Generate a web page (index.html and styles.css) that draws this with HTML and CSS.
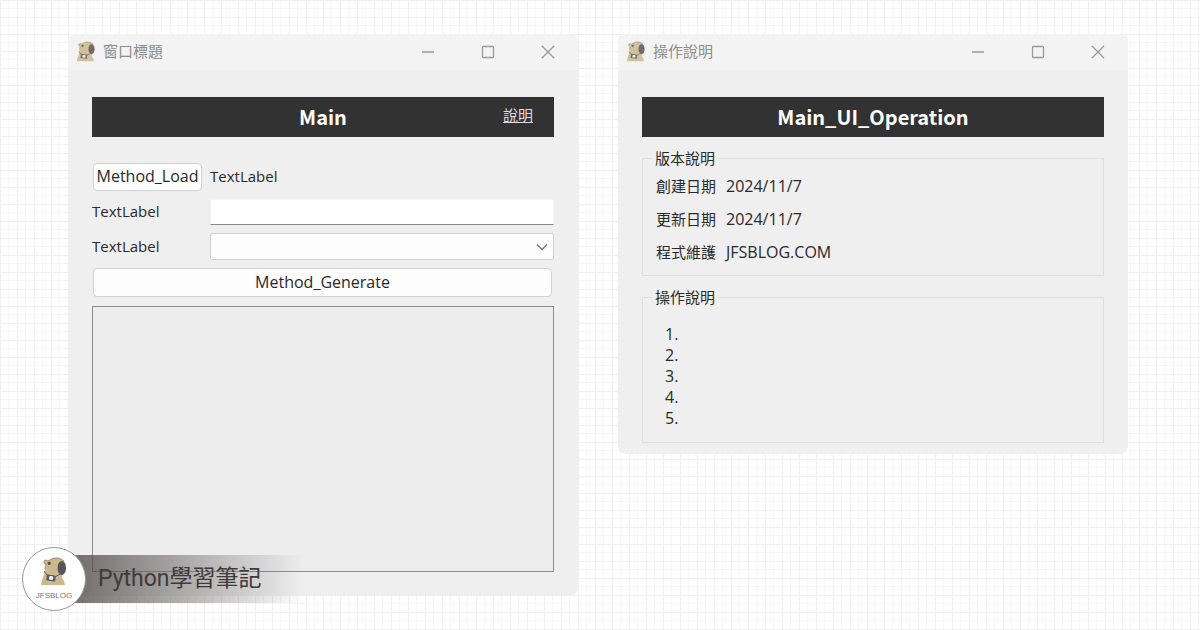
FILE: index.html
```html
<!DOCTYPE html>
<html lang="zh-Hant">
<head>
<meta charset="utf-8">
<meta name="viewport" content="width=device-width, initial-scale=1">
<title>Python學習筆記</title>
<link rel="stylesheet" href="styles.css">
</head>
<body>
<svg class="sprites" aria-hidden="true">
  <symbol id="capybara" viewBox="0 0 28 30">
    <path d="M1 28C2 22 5 17 5 12Q5 9 6 7.500Q3 7 4 4Q6 2 8 4Q13 0 18 1Q24 2 25.500 7Q27 13 24 17Q21 19 22 21Q25 24 25 28Z" fill="#cdb88d"/>
    <path d="M5 12Q5 9 6 7.500Q3 7 4 4Q6 2 8 4Q13 0 18 1Q22 2 24 4" fill="none" stroke="#80715d" stroke-width=".7"/>
    <ellipse cx="21.700" cy="11" rx="4.200" ry="7" fill="#57545a"/>
    <circle cx="9.200" cy="6.300" r="1.600" fill="#53483f"/>
    <path d="M4 14L7 18M20 17L15 20" fill="none" stroke="#5a5149" stroke-width=".9"/>
    <rect x="6.500" y="18" width="9" height="6" rx="1" fill="#595960" transform="rotate(7 11 21)"/>
    <rect x="9" y="19.200" width="4.200" height="3.600" rx="1" fill="#e4eff7" transform="rotate(7 11 21)"/>
  </symbol>
</svg>
<main class="desktop">
  <section class="window">
    <header class="titlebar">
      <svg class="app-icon" aria-hidden="true"><use href="#capybara"/></svg>
      <span class="window-title">窗口標題</span>
      <div class="controls">
        <button type="button" aria-label="Minimize"><svg viewBox="0 0 14 14"><path d="M1 7H13"/></svg></button>
        <button type="button" aria-label="Maximize"><svg viewBox="0 0 14 14"><rect x="1.500" y="1.500" width="11" height="11" rx="1"/></svg></button>
        <button type="button" aria-label="Close"><svg viewBox="0 0 14 14"><path d="M1 1L13 13M13 1L1 13"/></svg></button>
      </div>
    </header>
    <div class="content">
      <div class="banner"><h1>Main</h1><a class="help" href="#operation">說明</a></div>
      <form class="form">
        <button class="btn" type="button">Method_Load</button>
        <span class="label">TextLabel</span>
        <label class="label" for="value">TextLabel</label>
        <input class="field" id="value" type="text">
        <label class="label" for="choice">TextLabel</label>
        <div class="select-wrap">
          <select class="select" id="choice"><option></option></select>
          <svg class="chevron" viewBox="0 0 12 8" aria-hidden="true"><path d="M1 1.500L6 6.500L11 1.500"/></svg>
        </div>
        <button class="btn wide" type="button">Method_Generate</button>
      </form>
      <div class="canvas"></div>
    </div>
  </section>
  <section class="window" id="operation">
    <header class="titlebar">
      <svg class="app-icon" aria-hidden="true"><use href="#capybara"/></svg>
      <span class="window-title">操作說明</span>
      <div class="controls">
        <button type="button" aria-label="Minimize"><svg viewBox="0 0 14 14"><path d="M1 7H13"/></svg></button>
        <button type="button" aria-label="Maximize"><svg viewBox="0 0 14 14"><rect x="1.500" y="1.500" width="11" height="11" rx="1"/></svg></button>
        <button type="button" aria-label="Close"><svg viewBox="0 0 14 14"><path d="M1 1L13 13M13 1L1 13"/></svg></button>
      </div>
    </header>
    <div class="content compact">
      <div class="banner"><h1>Main_UI_Operation</h1></div>
      <fieldset class="group">
        <legend>版本說明</legend>
        <dl class="facts">
          <dt>創建日期</dt><dd>2024/11/7</dd>
          <dt>更新日期</dt><dd>2024/11/7</dd>
          <dt>程式維護</dt><dd>JFSBLOG.COM</dd>
        </dl>
      </fieldset>
      <fieldset class="group">
        <legend>操作說明</legend>
        <div class="steps"><span>1.</span><span>2.</span><span>3.</span><span>4.</span><span>5.</span></div>
      </fieldset>
    </div>
  </section>
</main>
<aside class="brand">
  <div class="logo"><svg aria-hidden="true"><use href="#capybara"/></svg><span>JFSBLOG</span></div>
  <div class="ribbon">Python學習筆記</div>
</aside>
</body>
</html>
```
FILE: styles.css
```css
* { box-sizing: border-box; }
body {
  margin: 0;
  min-height: 100vh;
  position: relative;
  color: #292929;
  font: 15px/20px "Open Sans", "Noto Sans CJK TC", sans-serif;
  background-color: #fff;
  background-image:
    linear-gradient(#f0f0f0 1px, transparent 1px),
    linear-gradient(90deg, #f0f0f0 1px, transparent 1px),
    linear-gradient(transparent 8px, #f6f6f6 8px, #f6f6f6 9px, transparent 9px),
    linear-gradient(90deg, transparent 8px, #f6f6f6 8px, #f6f6f6 9px, transparent 9px);
  background-size: 17px 17px;
}
.sprites { position: absolute; width: 0; height: 0; }
.desktop {
  display: flex;
  align-items: flex-start;
  gap: 40px;
  padding: 34px 72px 34px 68px;
}
.window {
  flex: 1;
  min-width: 0;
  overflow: hidden;
  border-radius: 8px;
  background: #efefef;
}
.titlebar {
  display: flex;
  align-items: center;
  height: 36px;
  padding: 0 0 0 8px;
  background: #f3f3f3;
}
.app-icon { width: 20px; height: 22px; opacity: .85; }
.window-title { margin-left: 7px; padding-bottom: 2px; color: #8d8d8d; }
.controls { display: flex; margin-left: auto; }
.controls button {
  display: grid;
  place-items: center;
  width: 60px;
  height: 36px;
  padding: 0;
  border: 0;
  background: none;
}
.controls svg {
  width: 14px;
  height: 14px;
  fill: none;
  stroke: #999;
  stroke-width: 1.3;
}
.content { padding: 27px 24px 24px; }
.compact { padding-bottom: 11px; }
.banner {
  display: grid;
  grid-template-columns: 1fr auto 1fr;
  align-items: center;
  height: 40px;
  padding: 0 21px;
  background: #323232;
}
.banner h1 {
  grid-column: 2;
  margin: 0;
  color: #fff;
  font: bold 20px/40px "Noto Sans CJK TC", sans-serif;
}
.help { justify-self: end; color: #ddd; margin-bottom: 4px; }
.form {
  display: grid;
  grid-template-columns: 110px 1fr;
  align-items: center;
  gap: 8px;
  margin-top: 26px;
}
.label { padding-bottom: 2px; }
.btn {
  height: 28px;
  margin: 0 0 0 1px;
  padding: 0 0 2px;
  border: 1px solid #d2d2d2;
  border-radius: 4px;
  background: #fdfdfd;
  color: inherit;
  font: inherit;
  font-size: 16px;
}
.wide { grid-column: 1 / -1; height: 29px; margin-right: 2px; }
.field {
  width: 100%;
  height: 26px;
  border: 1px solid #f3f3f3;
  border-bottom-color: #888;
  background: #fff;
  font: inherit;
}
.select-wrap { position: relative; height: 27px; }
.select {
  display: block;
  width: 100%;
  height: 27px;
  appearance: none;
  border: 1px solid #cfcfcf;
  border-radius: 2px;
  background: #fdfdfd;
  font: inherit;
}
.chevron {
  position: absolute;
  top: 10px;
  right: 6px;
  width: 12px;
  height: 8px;
  fill: none;
  stroke: #777;
  stroke-width: 1.3;
  pointer-events: none;
}
.canvas {
  height: 266px;
  margin-top: 9px;
  border: 1px solid #8c8c8c;
  background: #ededed;
}
.group {
  min-width: 0;
  margin: 11px 0 0;
  padding: 8px 13px 13px;
  border: 1px solid #dfdfdf;
}
.group legend { margin-left: -4px; padding: 0 3px; }
.facts {
  display: grid;
  grid-template-columns: auto 1fr;
  gap: 13px 10px;
  margin: 0;
}
.facts dd { margin: 0; font-size: 16px; }
.steps {
  display: flex;
  flex-direction: column;
  padding: 9px 9px 0;
  font-size: 16px;
  line-height: 21px;
}
.brand {
  position: absolute;
  left: 22px;
  bottom: 19px;
  display: flex;
  align-items: center;
}
.logo {
  position: relative;
  z-index: 1;
  display: flex;
  flex-direction: column;
  align-items: center;
  width: 64px;
  height: 64px;
  padding-top: 9px;
  border: 1px solid #999;
  border-radius: 50%;
  background: #fff;
  color: #777;
  font: 8px/18px "Liberation Sans", sans-serif;
}
.logo svg { width: 28px; height: 30px; }
.ribbon {
  width: 232px;
  height: 48px;
  margin-left: -14px;
  padding-left: 26px;
  color: #403a3a;
  font: 23px/48px Roboto, "Noto Sans CJK TC", sans-serif;
  white-space: nowrap;
  background: linear-gradient(90deg, rgba(70, 65, 65, .75), rgba(110, 104, 104, .55) 45%, rgba(150, 145, 145, 0));
}
```
